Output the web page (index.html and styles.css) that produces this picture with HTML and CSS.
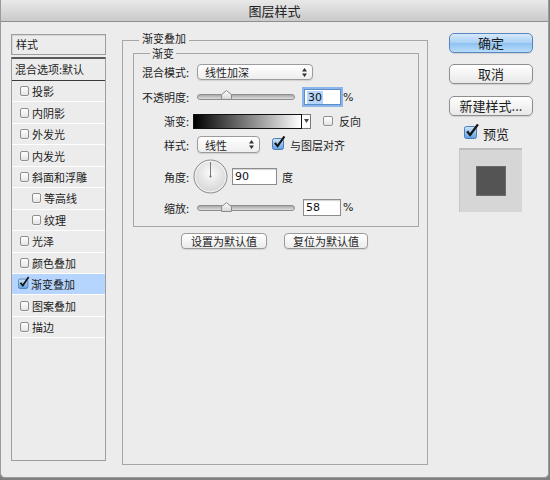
FILE: index.html
```html
<!DOCTYPE html>
<html lang="zh-CN">
<head>
<meta charset="utf-8">
<title>图层样式</title>
<link rel="stylesheet" href="styles.css">
</head>
<body>
<div class="window">
  <div class="titlebar">图层样式</div>
  <div class="main">
    <div class="sidebar">
      <div class="sb-head">样式</div>
      <div class="sb-list">
        <div class="sb-blend">混合选项:默认</div>
        <div class="sb-row"><span class="cb"></span>投影</div>
        <div class="sb-row"><span class="cb"></span>内阴影</div>
        <div class="sb-row"><span class="cb"></span>外发光</div>
        <div class="sb-row"><span class="cb"></span>内发光</div>
        <div class="sb-row"><span class="cb"></span>斜面和浮雕</div>
        <div class="sb-row sub"><span class="cb"></span>等高线</div>
        <div class="sb-row sub"><span class="cb"></span>纹理</div>
        <div class="sb-row"><span class="cb"></span>光泽</div>
        <div class="sb-row"><span class="cb"></span>颜色叠加</div>
        <div class="sb-row active"><svg class="cbx-s" width="12" height="13" viewBox="0 0 14 15"><defs><linearGradient id="gb1" x1="0" y1="0" x2="0" y2="1"><stop offset="0" stop-color="#d2e6fa"/><stop offset="1" stop-color="#5f9fe2"/></linearGradient></defs><rect x="0.5" y="3.5" width="11" height="11" rx="2" fill="url(#gb1)" stroke="#4a7cb6"/><path d="M2 8.5 L3.9 7.2 L5.4 9.6 L11.6 0.6 L13.3 1.8 L5.7 12.8 Z" fill="#151515"/></svg>渐变叠加</div>
        <div class="sb-row"><span class="cb"></span>图案叠加</div>
        <div class="sb-row"><span class="cb"></span>描边</div>
      </div>
    </div>

    <div class="center">
      <fieldset class="outer">
        <legend class="outer-legend">渐变叠加</legend>
        <fieldset class="inner">
          <legend class="inner-legend">渐变</legend>

          <div class="frow r1">
            <span class="lbl">混合模式:</span>
            <div class="select sel-wide"><span>线性加深</span><svg class="updown" width="5" height="9" viewBox="0 0 5 9"><path d="M0 3.6 L2.5 0 L5 3.6 Z M0 5.4 L2.5 9 L5 5.4 Z" fill="#333"/></svg></div>
          </div>

          <div class="frow r2">
            <span class="lbl">不透明度:</span>
            <div class="slider"><div class="track"></div><svg class="thumb" width="11" height="10" viewBox="0 0 11 10"><defs><linearGradient id="gt1" x1="0" y1="0" x2="0" y2="1"><stop offset="0" stop-color="#ffffff"/><stop offset="1" stop-color="#d4d4d4"/></linearGradient></defs><path d="M0.5 9.5 L0.5 4.6 L5.5 0.6 L10.5 4.6 L10.5 9.5 Z" fill="url(#gt1)" stroke="#8a8a8a"/></svg></div>
            <div class="field focus f-op"><span class="selected">30</span></div>
            <span class="unit">%</span>
          </div>

          <div class="frow r3">
            <span class="lbl">渐变:</span>
            <div class="grad"></div>
            <div class="grad-arrow"><svg width="5" height="4" viewBox="0 0 5 4"><path d="M0 0 L5 0 L2.5 4 Z" fill="#444"/></svg></div>
            <span class="cb cb-rev"></span>
            <span class="after-cb">反向</span>
          </div>

          <div class="frow r4">
            <span class="lbl">样式:</span>
            <div class="select sel-narrow"><span>线性</span><svg class="updown" width="5" height="9" viewBox="0 0 5 9"><path d="M0 3.6 L2.5 0 L5 3.6 Z M0 5.4 L2.5 9 L5 5.4 Z" fill="#333"/></svg></div>
            <svg class="cbx-align" width="14" height="14" viewBox="0 0 14 14"><defs><linearGradient id="gb2" x1="0" y1="0" x2="0" y2="1"><stop offset="0" stop-color="#d2e6fa"/><stop offset="1" stop-color="#5f9fe2"/></linearGradient></defs><rect x="0.5" y="2.5" width="11" height="11" rx="2" fill="url(#gb2)" stroke="#4a7cb6"/><path d="M2 7.5 L3.9 6.2 L5.4 8.6 L11.6 -0.2 L13.3 1 L5.7 11.8 Z" fill="#151515"/></svg>
            <span class="align-txt">与图层对齐</span>
          </div>

          <div class="frow r5">
            <span class="lbl">角度:</span>
            <svg class="dial" width="35" height="35" viewBox="0 0 35 35"><defs><radialGradient id="gd" cx="0.5" cy="0.4" r="0.6"><stop offset="0" stop-color="#fbfbfb"/><stop offset="1" stop-color="#d3d3d3"/></radialGradient></defs><circle cx="17.5" cy="17.5" r="16.5" fill="url(#gd)" stroke="#8c8c8c"/><circle cx="17.5" cy="17.5" r="15.3" fill="none" stroke="#ffffff" stroke-opacity="0.7"/><line x1="17.5" y1="17.5" x2="17.5" y2="3" stroke="#7a7a7a" stroke-width="1"/><circle cx="17.5" cy="17.5" r="1" fill="#666"/></svg>
            <div class="field f-angle">90</div>
            <span class="deg">度</span>
          </div>

          <div class="frow r6">
            <span class="lbl">缩放:</span>
            <div class="slider"><div class="track"></div><svg class="thumb" width="11" height="10" viewBox="0 0 11 10"><defs><linearGradient id="gt2" x1="0" y1="0" x2="0" y2="1"><stop offset="0" stop-color="#ffffff"/><stop offset="1" stop-color="#d4d4d4"/></linearGradient></defs><path d="M0.5 9.5 L0.5 4.6 L5.5 0.6 L10.5 4.6 L10.5 9.5 Z" fill="url(#gt2)" stroke="#8a8a8a"/></svg></div>
            <div class="field f-scale">58</div>
            <span class="unit">%</span>
          </div>
        </fieldset>

        <div class="defaults">
          <button class="btn btn-a">设置为默认值</button>
          <button class="btn btn-b">复位为默认值</button>
        </div>
      </fieldset>
    </div>

    <div class="actions">
      <button class="pbtn primary">确定</button>
      <button class="pbtn gap11">取消</button>
      <button class="pbtn gap12">新建样式...</button>
      <div class="preview-row">
        <svg class="cbx-prev" width="16" height="15" viewBox="0 0 16 15"><defs><linearGradient id="gb3" x1="0" y1="0" x2="0" y2="1"><stop offset="0" stop-color="#d2e6fa"/><stop offset="1" stop-color="#5f9fe2"/></linearGradient></defs><rect x="0.5" y="2.5" width="12" height="12" rx="2" fill="url(#gb3)" stroke="#4a7cb6"/><path d="M2.2 8 L4.2 6.6 L5.9 9.3 L13 -0.2 L14.9 1.1 L6.2 12.8 Z" fill="#151515"/></svg>
        <span>预览</span>
      </div>
      <div class="preview"><div class="swatch"></div></div>
    </div>
  </div>
</div>
</body>
</html>
```

FILE: styles.css
```css
* { box-sizing: border-box; }

body {
  margin: 0;
  background: #7f7f7f;
  font-family: "Noto Sans CJK SC", "DejaVu Sans", sans-serif;
  font-size: 11px;
  color: #1c1c1c;
}

.window {
  width: 549px;
  height: 478px;
  background: #ececec;
  border: 1px solid #9a9a9a;
  border-top: none;
  border-radius: 0 0 5px 5px;
  overflow: hidden;
}

.titlebar {
  height: 22px;
  line-height: 21px;
  text-align: center;
  font-size: 13px;
  color: #222;
  background: linear-gradient(#e9e9e9, #cacaca);
  border-bottom: 1px solid #8f8f8f;
}

.main {
  display: flex;
  align-items: flex-start;
  padding: 10px 0 0 10px;
}

/* ---------- sidebar ---------- */
.sidebar {
  width: 95px;
  height: 427px;
  margin-top: 2px;
  display: flex;
  flex-direction: column;
}

.sb-head {
  height: 21px;
  border: 1px solid #9e9e9e;
  box-shadow: inset 1px 1px 0 #d6d6d6;
  padding-left: 4px;
  line-height: 19px;
}

.sb-list {
  flex: 1;
  margin-top: 2px;
  border: 1px solid #9e9e9e;
  border-top: 2px solid #5a5a5a;
}

.sb-blend {
  height: 22px;
  line-height: 21px;
  padding-left: 3px;
  border-bottom: 1px solid #3a3a3a;
}

.sb-row {
  height: 21.45px;
  display: flex;
  align-items: center;
  padding-left: 8px;
  border-bottom: 1px solid #ffffff;
}

.sb-row.sub { padding-left: 20px; }

.sb-row.active { background: #b5d5fe; }

.cb {
  width: 9px;
  height: 10px;
  margin-right: 3px;
  border: 1px solid #8e8e8e;
  border-radius: 2px;
  background: linear-gradient(#ffffff, #e4e4e4);
  box-shadow: 0 1px 0 rgba(255,255,255,0.6);
  flex: none;
}

.cbx-s {
  margin-left: -2px;
  margin-right: 1px;
  margin-top: -3px;
  flex: none;
}

/* ---------- center ---------- */
.center { margin-left: 16px; }

fieldset {
  margin: 0;
  min-width: 0;
  border: 1px solid #a6a6a6;
}

.outer {
  width: 306px;
  height: 433px;
  padding: 0 8px 0 10px;
}

.outer-legend {
  padding: 0 3px 4px;
  margin-left: 6px;
  line-height: 12px;
}

.inner {
  padding: 5px 0 10px 0;
}

.inner-legend {
  padding: 0 2px;
  margin-left: 16px;
  line-height: 11px;
}

.frow {
  display: flex;
  align-items: center;
}

.r1 { height: 16px; }
.r2 { height: 16px; margin-top: 9px; }
.r3 { height: 16px; margin-top: 8px; }
.r4 { height: 17px; margin-top: 7px; }
.r5 { height: 35px; margin-top: 6px; }
.r6 { height: 17px; margin-top: 5px; }

.lbl {
  width: 55px;
  flex: none;
  text-align: right;
}

.select {
  height: 16px;
  margin-left: 8px;
  border: 1px solid #9c9c9c;
  border-radius: 4px;
  background: linear-gradient(#ffffff, #eeeeee);
  box-shadow: 0 1px 1px rgba(0,0,0,0.12);
  display: flex;
  align-items: center;
  justify-content: space-between;
  padding: 0 5px 0 7px;
  flex: none;
}

.sel-wide { width: 116px; }
.sel-narrow { width: 63px; height: 17px; }

.slider {
  position: relative;
  width: 98px;
  height: 16px;
  margin-left: 8px;
  display: flex;
  align-items: center;
  flex: none;
}

.track {
  flex: 1;
  height: 6px;
  border: 1px solid #8e8e8e;
  border-radius: 3px;
  background: linear-gradient(#a9a9a9, #dedede);
}

.thumb {
  position: absolute;
  left: 24px;
  top: 1px;
}

.r6 .thumb { top: 2px; }

.field {
  height: 16px;
  border: 1px solid #8c8c8c;
  background: #ffffff;
  box-shadow: inset 0 1px 1px rgba(0,0,0,0.18);
  font-family: "DejaVu Sans", sans-serif;
  font-size: 11px;
  color: #111;
  display: flex;
  align-items: center;
  padding-left: 2px;
  flex: none;
}

.focus {
  border-color: #5d8ccb;
  box-shadow: 0 0 0 2px #8ab6ea;
}

.selected {
  background: #b5d5fd;
  padding: 0 1px;
}

.f-op { width: 37px; margin-left: 9px; }
.f-angle { width: 45px; height: 17px; margin-left: 4px; }
.f-scale { width: 38px; height: 17px; margin-left: 8px; }

.unit {
  margin-left: 2px;
  font-family: "DejaVu Sans", sans-serif;
  font-size: 11px;
}

.grad {
  width: 109px;
  height: 15px;
  margin-left: 4px;
  border: 1px solid #111;
  background: linear-gradient(to right, #000000, #ffffff);
  flex: none;
}

.grad-arrow {
  width: 9px;
  height: 15px;
  border: 1px solid #7a7a7a;
  border-left: none;
  background: #ffffff;
  display: flex;
  align-items: center;
  justify-content: center;
  flex: none;
}

.cb-rev {
  width: 10px;
  height: 10px;
  margin: 0 0 0 12px;
}

.after-cb { margin-left: 6px; }

.cbx-align {
  margin-left: 12px;
  margin-top: -3px;
  flex: none;
}

.align-txt { margin-left: 4px; }

.dial {
  margin-left: 4px;
  flex: none;
}

.deg { margin-left: 5px; }

.defaults {
  display: flex;
  gap: 17px;
  margin: 6px 0 0 48px;
}

.btn {
  height: 16px;
  padding: 0;
  border: 1px solid #9a9a9a;
  border-radius: 4px;
  background: linear-gradient(#ffffff, #ebebeb);
  box-shadow: 0 1px 1px rgba(0,0,0,0.1);
  font-family: "Noto Sans CJK SC", sans-serif;
  font-size: 11px;
  line-height: 14px;
  color: #1c1c1c;
}

.btn-a { width: 86px; }
.btn-b { width: 84px; }

/* ---------- actions ---------- */
.actions {
  width: 84px;
  margin: 1px 0 0 21px;
  display: flex;
  flex-direction: column;
}

.pbtn {
  height: 20px;
  padding: 0;
  border: 1px solid #8f8f8f;
  border-radius: 5px;
  background: linear-gradient(#ffffff, #e8e8e8);
  box-shadow: 0 1px 1px rgba(0,0,0,0.12);
  font-family: "Noto Sans CJK SC", sans-serif;
  font-size: 13px;
  line-height: 18px;
  color: #1c1c1c;
}

.primary {
  border-color: #5a86bf;
  background: linear-gradient(#d6e9fc, #aad0f5 50%, #8fc2f1 52%, #b9dcfa);
}

.gap11 { margin-top: 11px; }
.gap12 { margin-top: 12px; }

.preview-row {
  height: 14px;
  margin-top: 10px;
  padding-left: 15px;
  display: flex;
  align-items: center;
  font-size: 13px;
}

.cbx-prev {
  margin-top: -3px;
  margin-right: 3px;
  flex: none;
}

.preview {
  width: 63px;
  height: 64px;
  margin: 8px 0 0 10px;
  background: #d6d6d6;
  border-top: 2px solid #bcbcbc;
  border-left: 1px solid #c4c4c4;
  display: flex;
  align-items: center;
  justify-content: center;
}

.swatch {
  width: 30px;
  height: 30px;
  background: #545454;
  border: 1px solid #6a6a6a;
}
```
